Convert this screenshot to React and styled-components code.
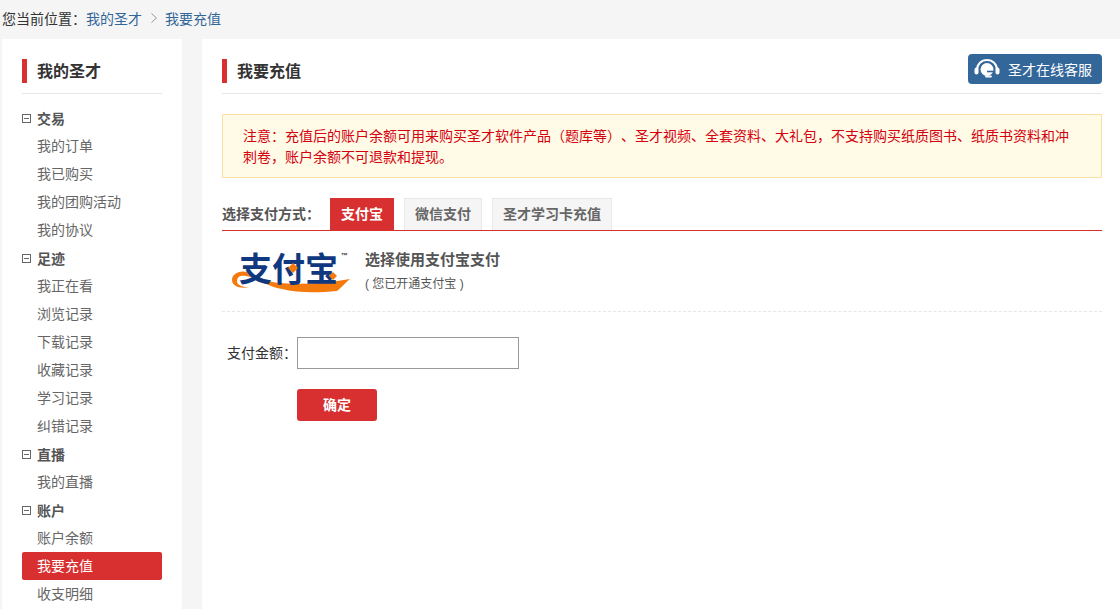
import React from 'react';
import styled, { createGlobalStyle } from 'styled-components';

const GlobalStyle = createGlobalStyle`
  html, body {
    margin: 0;
    padding: 0;
    height: 609px;
    overflow: hidden;
    background: #f5f5f5;
    font-family: "Liberation Sans", "Noto Sans CJK SC", sans-serif;
    text-spacing-trim: space-all;
  }
  * {
    box-sizing: border-box;
  }
`;

const Page = styled.div`
  width: 1120px;
  height: 609px;
  overflow: hidden;
`;

const Crumbs = styled.div`
  height: 39px;
  padding: 0 0 4px 2px;
  display: flex;
  align-items: center;
  font-size: 14px;
  color: #333;
`;

const CrumbLink = styled.a`
  color: #336699;
`;

const CrumbArrow = styled.svg`
  width: 8px;
  height: 10px;
  margin: 0 7px 0 8px;
`;

const Columns = styled.div`
  display: flex;
  align-items: stretch;
  gap: 20px;
  padding-left: 2px;
  height: 570px;
`;

const Sidebar = styled.aside`
  width: 180px;
  background: #fff;
  padding: 20px;
`;

const Main = styled.main`
  width: 918px;
  background: #fff;
  padding: 15px 18px 0 20px;
`;

const SideHead = styled.div`
  height: 35px;
  border-bottom: 1px solid #e6e6e6;
`;

const Heading = styled.h2`
  margin: 0;
  height: 24px;
  border-left: 5px solid #d83030;
  padding-left: 10px;
  font-size: 16px;
  line-height: 26px;
  font-weight: 700;
  color: #333;
`;

const Menu = styled.nav`
  margin-top: 10px;
`;

const GroupRow = styled.div`
  height: 28px;
  display: flex;
  align-items: center;
  font-size: 14px;
  font-weight: 700;
  color: #555;
`;

const Fold = styled.svg`
  width: 9px;
  height: 9px;
  margin-right: 6px;
  flex: none;
`;

const MenuItem = styled.a`
  display: block;
  height: 28px;
  line-height: 28px;
  padding-left: 15px;
  font-size: 14px;
  border-radius: 2px;
  color: ${(p) => (p.$active ? '#fff' : '#666')};
  background: ${(p) => (p.$active ? '#d83030' : 'transparent')};
`;

const TitleBar = styled.div`
  height: 40px;
  padding-top: 5px;
  display: flex;
  justify-content: space-between;
  align-items: flex-start;
  border-bottom: 1px solid #e6e6e6;
`;

const ServiceButton = styled.a`
  width: 134px;
  height: 30px;
  margin-top: -5px;
  display: flex;
  align-items: center;
  padding: 0 0 1px 6px;
  gap: 8px;
  border-radius: 4px;
  background: #336699;
  color: #fff;
  font-size: 14px;
`;

const Notice = styled.div`
  margin-top: 20px;
  height: 64px;
  padding: 11px 20px 9px;
  background: #fffbe6;
  border: 1px solid #fbdfa5;
  color: #d4000f;
  font-size: 14px;
  line-height: 21px;
`;

const PayRow = styled.div`
  margin-top: 20px;
  height: 33px;
  display: flex;
  border-bottom: 1px solid #d83030;
`;

const PayLabel = styled.span`
  width: 108px;
  font-size: 14px;
  font-weight: 700;
  line-height: 32px;
  color: #555;
`;

const Tab = styled.a`
  height: 32px;
  margin-right: 10px;
  padding: 0 10px;
  font-size: 14px;
  font-weight: 700;
  line-height: 30px;
  color: ${(p) => (p.$active ? '#fff' : '#666')};
  background: ${(p) => (p.$active ? '#d83030' : '#f5f5f5')};
  border: 1px solid ${(p) => (p.$active ? '#d83030' : '#e8e8e8')};
  border-bottom: 0;
`;

const Method = styled.div`
  height: 81px;
  display: flex;
  align-items: flex-start;
  padding: 11px 0 0 10px;
  border-bottom: 1px dashed #e6e6e6;
`;

const LogoBox = styled.div`
  width: 133px;
  flex: none;
`;

const MethodInfo = styled.div`
  padding-top: 8px;
`;

const MethodName = styled.div`
  font-size: 15px;
  line-height: 20px;
  font-weight: 700;
  color: #555;
`;

const MethodNote = styled.div`
  margin-top: 4px;
  font-size: 12px;
  line-height: 20px;
  color: #555;
`;

const FormRow = styled.div`
  margin-top: 25px;
  display: flex;
  align-items: center;
`;

const FieldLabel = styled.label`
  width: 75px;
  padding-left: 5px;
  padding-bottom: 2px;
  font-size: 14px;
  color: #333;
`;

const AmountInput = styled.input`
  width: 222px;
  height: 32px;
  border: 1px solid #999;
  background: #fff;
  outline: none;
  padding: 0 6px;
`;

const Confirm = styled.button`
  display: block;
  margin: 20px 0 0 75px;
  width: 80px;
  height: 32px;
  padding: 0 0 2px;
  border: 0;
  border-radius: 3px;
  background: #d83030;
  color: #fff;
  font-family: inherit;
  font-size: 14px;
  font-weight: 700;
`;

const menu = [
  { title: '交易', items: ['我的订单', '我已购买', '我的团购活动', '我的协议'] },
  { title: '足迹', items: ['我正在看', '浏览记录', '下载记录', '收藏记录', '学习记录', '纠错记录'] },
  { title: '直播', items: ['我的直播'] },
  { title: '账户', items: ['账户余额', '我要充值', '收支明细'] },
];

function FoldIcon() {
  return (
    <Fold viewBox="0 0 9 9">
      <rect x="0.5" y="0.5" width="8" height="8" fill="none" stroke="#666" />
      <path d="M2 4.5h5" stroke="#666" />
    </Fold>
  );
}

function HeadsetIcon() {
  return (
    <svg width="26" height="20" viewBox="0 0 26 20">
      <path d="M3 11C3 5 7.500 1 13 1s10 4 10 10" fill="none" stroke="#fff" strokeWidth="2" />
      <rect x="0.500" y="8.500" width="4" height="7" rx="2" fill="#fff" />
      <rect x="21.500" y="8.500" width="4" height="7" rx="2" fill="#fff" />
      <circle cx="13" cy="10.500" r="6.500" fill="#fff" />
      <path d="M13 12.500h6.500" stroke="#336699" strokeWidth="1.600" />
      <path d="M12 17.500h5" stroke="#fff" strokeWidth="1.800" strokeLinecap="round" />
    </svg>
  );
}

function AlipayLogo() {
  return (
    <svg width="120" height="60" viewBox="0 -8 120 60">
      <path
        d="M0 30C0 24 7 20 15 22c10 3 18 10 32 11 24 2 48 0 71-4-4 3-9 9-13 12-20 2-40 2-55-2C36 37 24 27 14 26 8 25 5 27 5 31c0 4 5 6 12 6-7 2-17 0-17-7z"
        fill="#f47a0e"
      />
      <text
        x="7"
        y="31"
        fontFamily="'Noto Sans CJK SC', sans-serif"
        fontSize="33"
        fontWeight="700"
        fill="#10387f"
      >
        支付宝
      </text>
      <path d="M61 13l5 5-5 5-5-5zM101 22l4 4-4 4-4-4z" fill="#f47a0e" />
      <text x="109" y="8" fontFamily="'Liberation Sans', sans-serif" fontSize="7" fontWeight="700" fill="#333">
        ™
      </text>
    </svg>
  );
}

export default function App() {
  return (
    <Page>
      <GlobalStyle />
      <Crumbs>
        您当前位置：
        <CrumbLink>我的圣才</CrumbLink>
        <CrumbArrow viewBox="0 0 8 10">
          <path d="M1.500 0.500l5 4.500-5 4.500" fill="none" stroke="#999" />
        </CrumbArrow>
        <CrumbLink>我要充值</CrumbLink>
      </Crumbs>
      <Columns>
        <Sidebar>
          <SideHead>
            <Heading>我的圣才</Heading>
          </SideHead>
          <Menu>
            {menu.map((group) => (
              <div key={group.title}>
                <GroupRow>
                  <FoldIcon />
                  {group.title}
                </GroupRow>
                {group.items.map((item) => (
                  <MenuItem key={item} $active={item === '我要充值'}>
                    {item}
                  </MenuItem>
                ))}
              </div>
            ))}
          </Menu>
        </Sidebar>
        <Main>
          <TitleBar>
            <Heading>我要充值</Heading>
            <ServiceButton>
              <HeadsetIcon />
              圣才在线客服
            </ServiceButton>
          </TitleBar>
          <Notice>
            注意：充值后的账户余额可用来购买圣才软件产品（题库等）、圣才视频、全套资料、大礼包，不支持购买纸质图书、纸质书资料和冲刺卷，账户余额不可退款和提现。
          </Notice>
          <PayRow>
            <PayLabel>选择支付方式：</PayLabel>
            <Tab $active>支付宝</Tab>
            <Tab>微信支付</Tab>
            <Tab>圣才学习卡充值</Tab>
          </PayRow>
          <Method>
            <LogoBox>
              <AlipayLogo />
            </LogoBox>
            <MethodInfo>
              <MethodName>选择使用支付宝支付</MethodName>
              <MethodNote>( 您已开通支付宝 )</MethodNote>
            </MethodInfo>
          </Method>
          <FormRow>
            <FieldLabel>支付金额：</FieldLabel>
            <AmountInput />
          </FormRow>
          <Confirm>确定</Confirm>
        </Main>
      </Columns>
    </Page>
  );
}
